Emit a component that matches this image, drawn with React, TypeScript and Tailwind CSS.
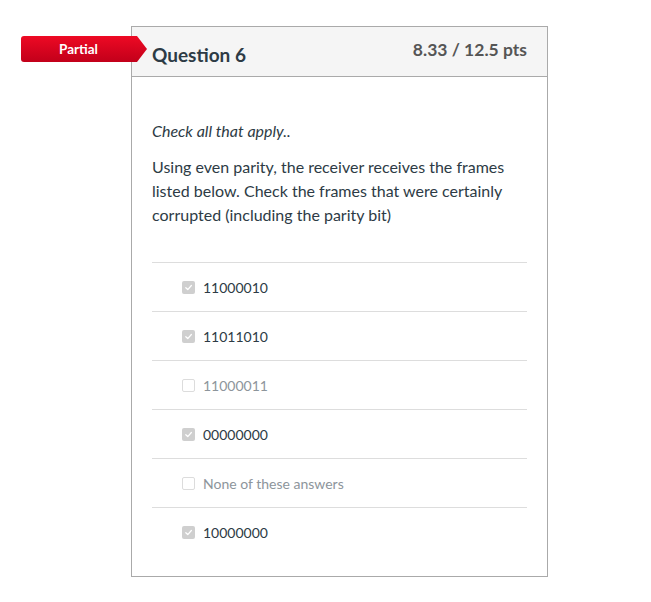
import React from 'react';

type Answer = {
  label: string;
  checked: boolean;
};

const answers: Answer[] = [
  { label: '11000010', checked: true },
  { label: '11011010', checked: true },
  { label: '11000011', checked: false },
  { label: '00000000', checked: true },
  { label: 'None of these answers', checked: false },
  { label: '10000000', checked: true },
];

function Box({ checked }: { checked: boolean }) {
  if (!checked) {
    return <span className="block w-[13px] h-[13px] rounded-[2px] border border-[#dcdcdc] bg-white" />;
  }
  return (
    <span className="flex items-center justify-center w-[13px] h-[13px] rounded-[2px] bg-[#cfcfcf]">
      <svg width="9" height="9" viewBox="0 0 10 10" fill="none">
        <path d="M2 5.2 L4.2 7.3 L8.2 2.8" stroke="#ffffff" strokeWidth="1.4" strokeLinecap="round" strokeLinejoin="round" />
      </svg>
    </span>
  );
}

export default function App() {
  return (
    <div className="w-[651px] h-[602px] bg-white pt-[26px] pl-[131px]" style={{ fontFamily: 'Lato, "Open Sans", sans-serif' }}>
      <div className="relative w-[417px] h-[551px] border border-[#aaaaaa] bg-white">
        {/* status badge */}
        <div className="absolute left-[-111px] top-[9px] flex items-center">
          <div className="w-[115px] h-[26px] rounded-l-[3px] bg-gradient-to-b from-[#ee0a24] to-[#c2001a] flex items-center justify-center text-white text-[13.5px] font-bold">
            Partial
          </div>
          <svg width="12" height="26" viewBox="0 0 12 26" className="-ml-px">
            <defs>
              <linearGradient id="tip" x1="0" y1="0" x2="0" y2="1">
                <stop offset="0" stopColor="#ee0a24" />
                <stop offset="1" stopColor="#c2001a" />
              </linearGradient>
            </defs>
            <path d="M0 0 H2 L12 13 L2 26 H0 Z" fill="url(#tip)" />
          </svg>
        </div>

        <div className="h-[50px] bg-[#f5f5f5] border-b border-[#aaaaaa] flex justify-between pl-5 pr-5">
          <div className="pt-[18px] text-[19px] font-bold text-[#2d3b45] leading-none">Question 6</div>
          <div className="pt-[14px] text-[17.5px] font-bold text-[#555555] leading-none">8.33 / 12.5 pts</div>
        </div>

        <div className="px-5 pt-[43px]">
          <p className="italic text-[16px] text-[#2d3b45] leading-[22px]">Check all that apply..</p>
          <p className="mt-[13px] text-[16px] leading-[24px] text-[#2d3b45]">
            Using even parity, the receiver receives the frames listed below. Check the frames that were certainly
            corrupted (including the parity bit)
          </p>
          <div className="mt-[35px]">
            {answers.map((a, i) => (
              <div key={i} className="h-[49px] flex items-center pl-[30px] border-t border-[#dddddd]">
                <Box checked={a.checked} />
                <span className={`ml-[8px] text-[14px] ${a.checked ? 'text-[#2d3b45]' : 'text-[#8d959b]'}`}>
                  {a.label}
                </span>
              </div>
            ))}
          </div>
        </div>
      </div>
    </div>
  );
}
